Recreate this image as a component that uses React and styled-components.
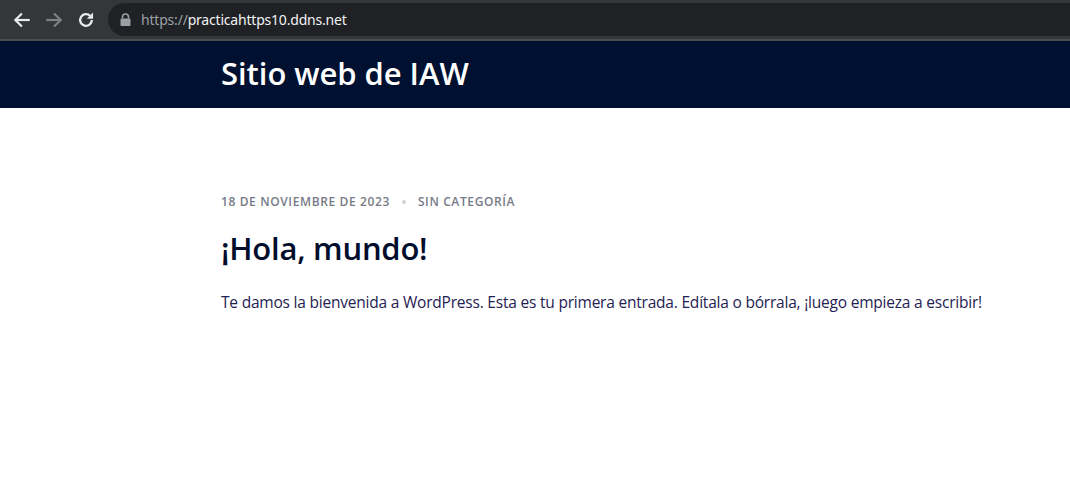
import React from "react";
import styled, { createGlobalStyle } from "styled-components";

const GlobalStyle = createGlobalStyle`
  html, body {
    margin: 0;
    padding: 0;
    background: #ffffff;
  }
  body {
    font-family: "Open Sans", "Noto Sans", "Liberation Sans", sans-serif;
  }
`;

const Page = styled.div`
  width: 1070px;
  height: 483px;
  overflow: hidden;
  background: #fff;
`;

const Toolbar = styled.div`
  height: 39px;
  background: #35363a;
  border-bottom: 2px solid #4a4c50;
  display: flex;
  align-items: center;
  padding-left: 6px;
  box-sizing: content-box;
`;

const NavButton = styled.div`
  width: 32px;
  height: 32px;
  display: flex;
  align-items: center;
  justify-content: center;
  color: ${p => (p.disabled ? "#7f8185" : "#e8eaed")};
`;

const Omnibox = styled.div`
  flex: 1;
  height: 33px;
  margin-left: 6px;
  background: #202124;
  border-radius: 17px 0 0 17px;
  display: flex;
  align-items: center;
  padding-left: 12px;
  gap: 10px;
  font-family: "Noto Sans", "Liberation Sans", sans-serif;
  font-size: 14px;
  letter-spacing: -0.2px;
`;

const Scheme = styled.span`
  color: #9aa0a6;
`;

const Host = styled.span`
  color: #f1f3f4;
`;

const SiteHeader = styled.header`
  height: 67px;
  background: #001030;
  display: flex;
  align-items: center;
  padding-left: 221px;
`;

const SiteTitle = styled.h1`
  margin: 0;
  color: #ffffff;
  font-size: 31px;
  font-weight: 600;
  letter-spacing: -0.05px;
  line-height: 1;
  padding-bottom: 2px;
`;

const Main = styled.main`
  padding: 85px 0 0 221px;
`;

const Meta = styled.div`
  display: flex;
  align-items: center;
  gap: 10px;
  font-size: 12px;
  font-weight: 600;
  letter-spacing: 0.62px;
  text-transform: uppercase;
  color: #767b88;
  line-height: 18px;
`;

const Dot = styled.span`
  width: 4px;
  height: 4px;
  border-radius: 50%;
  background: #d0d2d8;
  margin: 0 2px;
`;

const PostTitle = styled.h2`
  margin: 15px 0 0;
  font-size: 31px;
  font-weight: 600;
  color: #010d2d;
  letter-spacing: -0.25px;
  line-height: 44px;
`;

const Body = styled.p`
  margin: 20px 0 0;
  font-size: 15.5px;
  color: #1f2253;
  letter-spacing: -0.21px;
  line-height: 24px;
`;

const Arrow = ({ dir }) => (
  <svg width="20" height="20" viewBox="0 0 24 24" fill="none" stroke="currentColor" strokeWidth="2.6" strokeLinecap="square">
    {dir === "left" ? (
      <>
        <path d="M20 12H5" />
        <path d="M11 5l-7 7 7 7" />
      </>
    ) : (
      <>
        <path d="M4 12h15" />
        <path d="M13 5l7 7-7 7" />
      </>
    )}
  </svg>
);

const Reload = () => (
  <svg width="20" height="20" viewBox="0 0 24 24" fill="none">
    <path d="M19 12a7 7 0 1 1-2.05-4.95" stroke="currentColor" strokeWidth="2.8" />
    <path d="M20.5 3v7.5h-7.5z" fill="currentColor" />
  </svg>
);

const Lock = () => (
  <svg width="11" height="13" viewBox="0 0 11 13">
    <path d="M2.5 5.5V4a3 3 0 0 1 6 0v1.5" fill="none" stroke="#9aa0a6" strokeWidth="1.6" />
    <rect x="0.5" y="5.5" width="10" height="7.5" rx="1" fill="#9aa0a6" />
  </svg>
);

export default function App() {
  return (
    <Page>
      <GlobalStyle />
      <Toolbar>
        <NavButton><Arrow dir="left" /></NavButton>
        <NavButton disabled><Arrow dir="right" /></NavButton>
        <NavButton><Reload /></NavButton>
        <Omnibox>
          <Lock />
          <span>
            <Scheme>https://</Scheme>
            <Host>practicahttps10.ddns.net</Host>
          </span>
        </Omnibox>
      </Toolbar>
      <SiteHeader>
        <SiteTitle>Sitio web de IAW</SiteTitle>
      </SiteHeader>
      <Main>
        <Meta>
          <span>18 de noviembre de 2023</span>
          <Dot />
          <span>Sin categoría</span>
        </Meta>
        <PostTitle>¡Hola, mundo!</PostTitle>
        <Body>
          Te damos la bienvenida a WordPress. Esta es tu primera entrada. Edítala o bórrala, ¡luego empieza a escribir!
        </Body>
      </Main>
    </Page>
  );
}
